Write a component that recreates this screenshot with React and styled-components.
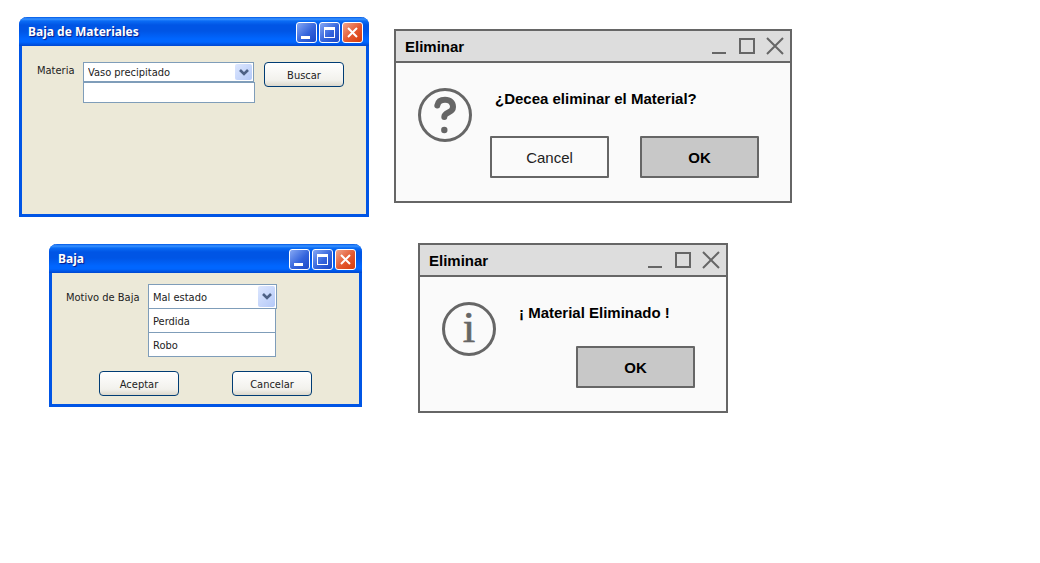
import React from "react";
import styled, { createGlobalStyle, css } from "styled-components";

const GlobalStyle = createGlobalStyle`
  *, *::before, *::after { box-sizing: border-box; }
  body { margin: 0; background: #fff; }
`;

const formFont = '"DejaVu Sans Condensed", Tahoma, sans-serif';
const dialogFont = '"Liberation Sans", Arial, sans-serif';

const Desktop = styled.main`
  position: relative;
  min-height: 100vh;
`;

const placed = css`
  position: absolute;
  left: ${(p) => p.$x}px;
  top: ${(p) => p.$y}px;
  width: ${(p) => p.$w}px;
  min-height: ${(p) => p.$h}px;
  display: flex;
  flex-direction: column;
`;

/* Blue windows */

const XpFrame = styled.section`
  ${placed}
  border: 3px solid #0055e5;
  border-top: 0;
  border-radius: 8px 8px 0 0;
  background: #ece9d8;
  color: #222;
  font: 11px/14px ${formFont};
`;

const XpTitleBar = styled.header`
  display: flex;
  align-items: center;
  gap: 2px;
  height: 29px;
  margin: 0 -3px;
  padding: 2px 6px 0 9px;
  border-radius: 8px 8px 0 0;
  background: linear-gradient(
    #0058e6 0, #3a93ff 2px, #0a6cf5 4px, #0055e5 8px, #0055e5 14px,
    #0066ff 22px, #0066ff 25px, #0047d0 29px
  );
`;

const XpTitle = styled.h2`
  flex: 1;
  margin: 0;
  padding-bottom: 2px;
  color: #fff;
  font: bold 12px/16px "Noto Sans", sans-serif;
  text-shadow: 1px 1px 1px #0a1883;
`;

const XpCaptionButton = styled.button`
  display: grid;
  width: 21px;
  height: 21px;
  padding: 0;
  border: 1px solid #fff;
  border-radius: 3px;
  background: ${(p) =>
    p.$close
      ? "linear-gradient(135deg, #f0a48c, #e4572e 55%, #d53c0c)"
      : "linear-gradient(135deg, #86a8f4, #3464dc 55%, #1a48c8)"};
`;

const XpBody = styled.form`
  flex: 1;
  display: flex;
  flex-direction: column;
  gap: 14px;
  padding: ${(p) => p.$pad};
`;

const FieldRow = styled.div`
  display: flex;
  align-items: flex-start;
  gap: ${(p) => p.$gap}px;
`;

const FieldLabel = styled.label`
  padding-top: ${(p) => p.$top}px;
  width: ${(p) => p.$w}px;
  white-space: nowrap;
`;

const FieldStack = styled.div`
  display: flex;
  flex-direction: column;
  width: ${(p) => p.$w}px;
`;

const ComboBox = styled.div`
  display: flex;
  position: relative;
  height: ${(p) => p.$h}px;
  margin-right: ${(p) => p.$inset || 0}px;
`;

const ComboSelect = styled.select`
  appearance: none;
  flex: 1;
  min-width: 0;
  padding: 2px 20px 0 4px;
  border: 1px solid #7f9db9;
  border-radius: 0;
  background: #fff;
  color: #222;
  font: inherit;
`;

const ComboArrow = styled.span`
  position: absolute;
  top: 2px;
  right: 2px;
  bottom: 2px;
  width: 17px;
  display: grid;
  place-items: center;
  border-radius: 2px;
  background: linear-gradient(135deg, #dde7fe, #b4c9f8);
  pointer-events: none;
`;

const TextBox = styled.input`
  height: 21px;
  padding: 0 4px;
  border: 1px solid #7f9db9;
  background: #fff;
  font: inherit;
`;

const OptionList = styled.ul`
  margin: -1px 1px 0 0;
  padding: 0;
  list-style: none;
`;

const OptionItem = styled.li`
  height: 24px;
  padding: 1px 4px 0;
  border: 1px solid #7f9db9;
  border-bottom: 0;
  background: #fff;
  line-height: 24px;

  &:last-child {
    height: 25px;
    border-bottom: 1px solid #7f9db9;
  }
`;

const XpButton = styled.button`
  width: 80px;
  height: 25px;
  padding: 2px 0 0;
  border: 1px solid #003c74;
  border-radius: 4px;
  background: linear-gradient(#fff, #f2f1ec 75%, #dcd8cc);
  color: #222;
  font: inherit;
`;

const ButtonRow = styled.div`
  display: flex;
  gap: 53px;
  padding-left: 33px;
`;

/* Grey dialogs */

const DialogFrame = styled.section`
  ${placed}
  border: 2px solid #666;
  background: #fafafa;
  color: #000;
  font: 15px/20px ${dialogFont};
`;

const DialogBar = styled.header`
  display: flex;
  align-items: center;
  gap: 10px;
  height: 32px;
  padding: 0 6px 0 9px;
  border-bottom: 2px solid #666;
  background: #ddd;
`;

const DialogTitle = styled.h2`
  flex: 1;
  margin: 0;
  padding-top: 2px;
  font: inherit;
  font-weight: bold;
`;

const DialogCaptionButton = styled.button`
  display: grid;
  width: 18px;
  height: 18px;
  padding: 0;
  border: 0;
  background: none;
`;

const DialogBody = styled.div`
  flex: 1;
  display: flex;
  gap: 18px;
  padding: 25px 31px 23px 22px;
`;

const DialogIcon = styled.svg`
  flex: none;
  width: 54px;
  height: 54px;
  fill: none;
  stroke: #666;
`;

const DialogContent = styled.div`
  flex: 1;
  display: flex;
  flex-direction: column;
  justify-content: space-between;
`;

const Message = styled.p`
  margin: 0;
  padding: 1px 0 0 5px;
  font-weight: bold;
`;

const DialogActions = styled.div`
  display: flex;
  justify-content: flex-end;
  gap: 31px;
`;

const DialogButton = styled.button`
  width: 119px;
  height: 42px;
  padding: 2px 0 0;
  border: 2px solid #666;
  border-radius: 1px;
  background: ${(p) => (p.$primary ? "#c8c8c8" : "#fafafa")};
  color: ${(p) => (p.$primary ? "#000" : "#222")};
  font: inherit;
  font-weight: ${(p) => (p.$primary ? "bold" : "normal")};
`;

function XpWindow({ title, pad, children, ...place }) {
  return (
    <XpFrame {...place} aria-label={title}>
      <XpTitleBar>
        <XpTitle>{title}</XpTitle>
        <XpCaptionButton aria-label="Minimizar">
          <svg width="19" height="19" fill="#fff"><path d="M4 13h9v3H4z" /></svg>
        </XpCaptionButton>
        <XpCaptionButton aria-label="Maximizar">
          <svg width="19" height="19" fill="#fff"><path fillRule="evenodd" d="M4 4h11v11H4zM5 7v7h9V7z" /></svg>
        </XpCaptionButton>
        <XpCaptionButton $close aria-label="Cerrar">
          <svg width="19" height="19" stroke="#fff" strokeWidth="2"><path d="M5 5l9 9M14 5l-9 9" /></svg>
        </XpCaptionButton>
      </XpTitleBar>
      <XpBody $pad={pad} onSubmit={(e) => e.preventDefault()}>{children}</XpBody>
    </XpFrame>
  );
}

function Combo({ id, options, height, inset }) {
  return (
    <ComboBox $h={height} $inset={inset}>
      <ComboSelect id={id}>
        {options.map((o) => <option key={o}>{o}</option>)}
      </ComboSelect>
      <ComboArrow>
        <svg width="10" height="7" fill="none" stroke="#4d6185" strokeWidth="2.600"><path d="M1 1l4 4 4-4" /></svg>
      </ComboArrow>
    </ComboBox>
  );
}

function Dialog({ title, icon, message, actions, ...place }) {
  return (
    <DialogFrame {...place} role="dialog" aria-label={title}>
      <DialogBar>
        <DialogTitle>{title}</DialogTitle>
        <DialogCaptionButton aria-label="Minimizar">
          <svg width="18" height="18" stroke="#666" strokeWidth="2"><path d="M2 16h14" /></svg>
        </DialogCaptionButton>
        <DialogCaptionButton aria-label="Maximizar">
          <svg width="18" height="18" fill="none" stroke="#666" strokeWidth="2"><path d="M2 2h14v14H2z" /></svg>
        </DialogCaptionButton>
        <DialogCaptionButton aria-label="Cerrar">
          <svg width="18" height="18" stroke="#666" strokeWidth="2"><path d="M1 1l16 16M17 1L1 17" /></svg>
        </DialogCaptionButton>
      </DialogBar>
      <DialogBody>
        {icon}
        <DialogContent>
          <Message>{message}</Message>
          <DialogActions>{actions}</DialogActions>
        </DialogContent>
      </DialogBody>
    </DialogFrame>
  );
}

const QuestionIcon = () => (
  <DialogIcon viewBox="0 0 54 54" aria-hidden="true">
    <circle cx="27" cy="27" r="25.5" strokeWidth="3" />
    <path d="M19.300 17.500C20 13.500 23 11.700 27 11.700c5 0 8 2.900 8 7.300 0 6.500-8.700 4.500-8.700 10" strokeWidth="6" strokeLinecap="round" />
    <circle cx="26.300" cy="42" r="3.200" fill="#666" stroke="none" />
  </DialogIcon>
);

const InfoIcon = () => (
  <DialogIcon viewBox="0 0 54 54" aria-hidden="true">
    <circle cx="27" cy="27" r="25.5" strokeWidth="3" />
    <text x="27" y="40" textAnchor="middle" fontFamily="Liberation Serif, serif" fontSize="45" fill="#666" strokeWidth="0.600">i</text>
  </DialogIcon>
);

export default function App() {
  return (
    <>
      <GlobalStyle />
      <Desktop>
        <XpWindow title="Baja de Materiales" pad="16px 22px 16px 15px" $x={19} $y={17} $w={350} $h={200}>
          <FieldRow $gap={9}>
            <FieldLabel htmlFor="materia" $top={2} $w={37}>Materia</FieldLabel>
            <FieldStack $w={172}>
              <Combo id="materia" options={["Vaso precipitado"]} height={20} inset={1} />
              <TextBox type="text" aria-label="Detalle" />
            </FieldStack>
            <XpButton type="submit">Buscar</XpButton>
          </FieldRow>
        </XpWindow>

        <Dialog
          title="Eliminar"
          icon={<QuestionIcon />}
          message="¿Decea eliminar el Material?"
          actions={
            <>
              <DialogButton>Cancel</DialogButton>
              <DialogButton $primary>OK</DialogButton>
            </>
          }
          $x={394} $y={29} $w={398} $h={174}
        />

        <XpWindow title="Baja" pad="11px 14px 8px" $x={49} $y={244} $w={313} $h={163}>
          <FieldRow $gap={10}>
            <FieldLabel htmlFor="motivo" $top={7} $w={72}>Motivo de Baja</FieldLabel>
            <FieldStack $w={129}>
              <Combo id="motivo" options={["Mal estado", "Perdida", "Robo"]} height={25} />
              <OptionList role="listbox" aria-label="Motivo de Baja">
                <OptionItem role="option">Perdida</OptionItem>
                <OptionItem role="option">Robo</OptionItem>
              </OptionList>
            </FieldStack>
          </FieldRow>
          <ButtonRow>
            <XpButton type="submit">Aceptar</XpButton>
            <XpButton type="button">Cancelar</XpButton>
          </ButtonRow>
        </XpWindow>

        <Dialog
          title="Eliminar"
          icon={<InfoIcon />}
          message="¡ Material Eliminado !"
          actions={<DialogButton $primary>OK</DialogButton>}
          $x={418} $y={243} $w={310} $h={170}
        />
      </Desktop>
    </>
  );
}
